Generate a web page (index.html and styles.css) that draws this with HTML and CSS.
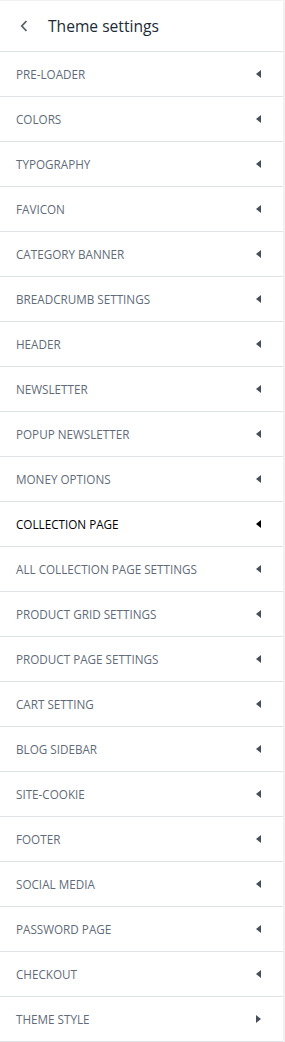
FILE: index.html
```html
<!DOCTYPE html>
<html lang="en">
  <head>
    <meta charset="utf-8" />
    <link rel="stylesheet" href="styles.css">
  </head>
  <body>
    <div class="panel">
      <div class="panel-header">
        <button class="back" aria-label="Back">
          <svg width="8" height="12" viewBox="0 0 8 12"><path d="M6.5 1 L1.8 6 L6.5 11" fill="none" stroke="#5c5f62" stroke-width="1.8"/></svg>
        </button>
        <h1>Theme settings</h1>
      </div>

      <ul class="menu">
        <li>PRE-LOADER<span class="caret"></span></li>
        <li>COLORS<span class="caret"></span></li>
        <li>TYPOGRAPHY<span class="caret"></span></li>
        <li>FAVICON<span class="caret"></span></li>
        <li>CATEGORY BANNER<span class="caret"></span></li>
        <li>BREADCRUMB SETTINGS<span class="caret"></span></li>
        <li>HEADER<span class="caret"></span></li>
        <li>NEWSLETTER<span class="caret"></span></li>
        <li>POPUP NEWSLETTER<span class="caret"></span></li>
        <li>MONEY OPTIONS<span class="caret"></span></li>
        <li class="active">COLLECTION PAGE<span class="caret"></span></li>
        <li>ALL COLLECTION PAGE SETTINGS<span class="caret"></span></li>
        <li>PRODUCT GRID SETTINGS<span class="caret"></span></li>
        <li>PRODUCT PAGE SETTINGS<span class="caret"></span></li>
        <li>CART SETTING<span class="caret"></span></li>
        <li>BLOG SIDEBAR<span class="caret"></span></li>
        <li>SITE-COOKIE<span class="caret"></span></li>
        <li>FOOTER<span class="caret"></span></li>
        <li>SOCIAL MEDIA<span class="caret"></span></li>
        <li>PASSWORD PAGE<span class="caret"></span></li>
        <li>CHECKOUT<span class="caret"></span></li>
        <li class="open">THEME STYLE<span class="caret"></span></li>
      </ul>
    </div>
  </body>
</html>
```

FILE: styles.css
```css
body {
  margin: 0;
  font-family: "Open Sans", "Noto Sans", sans-serif;
  background: #f1f1f1;
}

.panel {
  width: 283px;
  height: 1042px;
  background: #fff;
  border-top: 1px solid #f1f1f1;
  box-sizing: border-box;
}

.panel-header {
  display: flex;
  align-items: center;
  height: 50px;
  border-bottom: 1px solid #dfe3e8;
}

.back {
  width: 48px;
  height: 50px;
  padding: 0;
  border: none;
  background: none;
  display: flex;
  align-items: center;
  justify-content: center;
}

.panel-header h1 {
  margin: 0;
  font-size: 15.6px;
  font-weight: 500;
  color: #212b36;
}

.menu {
  list-style: none;
  margin: 0;
  padding: 0;
}

.menu li {
  display: flex;
  align-items: center;
  justify-content: space-between;
  height: 44px;
  padding: 0 22px 0 16px;
  border-bottom: 1px solid #dfe3e8;
  font-size: 11.7px;
  color: #5f6b78;
}

.menu li.active {
  color: #000;
}

.caret {
  width: 0;
  height: 0;
  border-top: 4px solid transparent;
  border-bottom: 4px solid transparent;
  border-right: 5px solid #454f5b;
}

.menu li.active .caret {
  border-right-color: #000;
}

.menu li.open .caret {
  border-right: none;
  border-left: 5px solid #454f5b;
}
```
